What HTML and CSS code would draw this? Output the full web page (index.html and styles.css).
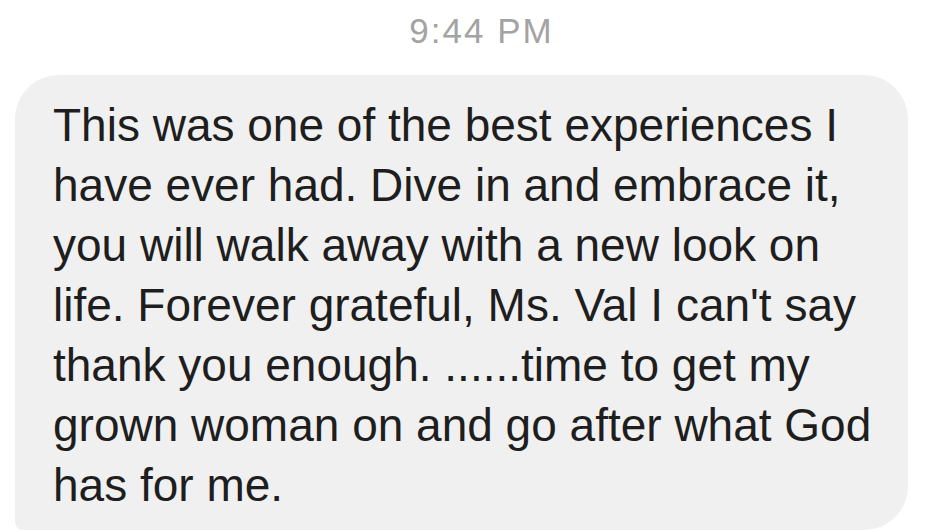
FILE: index.html
```html
<!DOCTYPE html>
<html>
<head>
<meta charset="utf-8">
<link rel="stylesheet" href="styles.css">
</head>
<body>
<div class="thread">
  <div class="time">9:44 PM</div>
  <div class="bubble">
    <p class="msg">This was one of the best experiences I<br>have ever had. Dive in and embrace it,<br>you will walk away with a new look on<br>life. Forever grateful, Ms. Val I can't say<br>thank you enough. ......time to get my<br>grown woman on and go after what God<br>has for me.</p>
  </div>
</div>
</body>
</html>
```
FILE: styles.css
```css
html, body {
  margin: 0;
  padding: 0;
  background: #ffffff;
  overflow: hidden;
}
.thread {
  width: 925px;
  height: 532px;
  display: flex;
  flex-direction: column;
  font-family: "Liberation Sans", Arial, sans-serif;
}
.time {
  text-align: center;
  color: #a3a3a3;
  font-size: 35px;
  letter-spacing: 2px;
  line-height: 40px;
  padding: 11px 0 0 38px;
  height: 75px;
  box-sizing: border-box;
  flex-shrink: 0;
}
.bubble {
  margin-left: 15px;
  width: 893px;
  height: 455px;
  flex-shrink: 0;
  background: #f0f0f0;
  border-radius: 44px 44px 44px 8px;
  padding: 20px 0 0 38px;
  box-sizing: border-box;
}
.msg {
  margin: 0;
  color: #1e1e1e;
  font-size: 46px;
  line-height: 60px;
  white-space: nowrap;
}
```
